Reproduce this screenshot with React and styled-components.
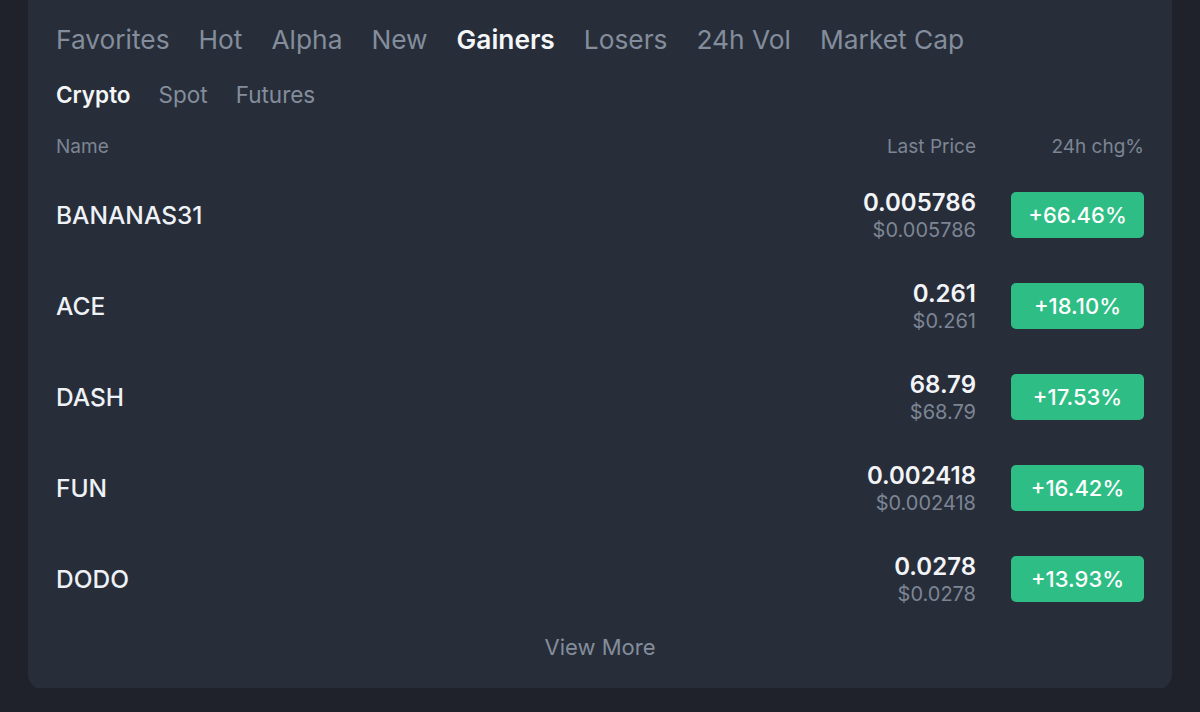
import styled, { createGlobalStyle } from 'styled-components';

const GlobalStyle = createGlobalStyle`
    html, body {
        margin: 0;
        padding: 0;
        background-color: #1f222a;
        font-family: Inter, "Noto Sans", sans-serif;
        overflow: hidden;
    }
`;

const Page = styled.div`
    width: 1200px;
    height: 712px;
    padding: 0 28px;
    box-sizing: border-box;
`;

const Card = styled.div`
    margin-top: -24px;
    height: 714px;
    box-sizing: border-box;
    padding: 43px 28px 0;
    border-radius: 16px;
    background-color: #272e3a;
    display: flex;
    flex-direction: column;
`;

const Tabs = styled.div`
    display: flex;
    gap: ${(p) => p.$gap}px;
    align-items: center;
    height: ${(p) => p.$height}px;
`;

const Tab = styled.div`
    font-size: ${(p) => p.$size}px;
    font-weight: ${(p) => (p.$active ? 600 : 400)};
    color: ${(p) => (p.$active ? '#f4f6f8' : '#848d9b')};
    white-space: nowrap;
`;

const Grid = styled.div`
    display: grid;
    grid-template-columns: 1fr 200px 168px;
    align-items: center;
`;

const Header = styled(Grid)`
    height: 32px;
    margin-top: 1px;
    margin-bottom: 7px;
    font-size: 19px;
    color: #7d8594;
`;

const HeadCell = styled.div`
    text-align: ${(p) => p.$align || 'left'};
`;

const Row = styled(Grid)`
    height: 91px;
`;

const Name = styled.div`
    font-size: 24.5px;
    font-weight: 500;
    color: #eef1f5;
`;

const Price = styled.div`
    display: flex;
    flex-direction: column;
    align-items: flex-end;
    gap: 1px;
`;

const PriceMain = styled.div`
    font-size: 24px;
    font-weight: 600;
    color: #f2f4f7;
`;

const PriceSub = styled.div`
    font-size: 20px;
    color: #7d8594;
`;

const Badge = styled.div`
    justify-self: end;
    width: 133px;
    height: 46px;
    border-radius: 5px;
    background-color: #2ebd85;
    color: #ffffff;
    font-size: 22px;
    font-weight: 500;
    display: flex;
    align-items: center;
    justify-content: center;
`;

const ViewMore = styled.div`
    text-align: center;
    font-size: 22px;
    color: #848d9b;
    margin-top: 10px;
`;

const tabs = ['Favorites', 'Hot', 'Alpha', 'New', 'Gainers', 'Losers', '24h Vol', 'Market Cap'];
const subTabs = ['Crypto', 'Spot', 'Futures'];

const rows = [
    { name: 'BANANAS31', price: '0.005786', usd: '$0.005786', chg: '+66.46%' },
    { name: 'ACE', price: '0.261', usd: '$0.261', chg: '+18.10%' },
    { name: 'DASH', price: '68.79', usd: '$68.79', chg: '+17.53%' },
    { name: 'FUN', price: '0.002418', usd: '$0.002418', chg: '+16.42%' },
    { name: 'DODO', price: '0.0278', usd: '$0.0278', chg: '+13.93%' },
];

export default function App() {
    return (
        <Page>
            <GlobalStyle />
            <Card>
                <Tabs $gap={29} $height={40}>
                    {tabs.map((t) => (
                        <Tab key={t} $size={26.3} $active={t === 'Gainers'}>{t}</Tab>
                    ))}
                </Tabs>
                <Tabs $gap={28} $height={70}>
                    {subTabs.map((t) => (
                        <Tab key={t} $size={22.5} $active={t === 'Crypto'}>{t}</Tab>
                    ))}
                </Tabs>
                <Header>
                    <HeadCell>Name</HeadCell>
                    <HeadCell $align="right">Last Price</HeadCell>
                    <HeadCell $align="right">24h chg%</HeadCell>
                </Header>
                {rows.map((r) => (
                    <Row key={r.name}>
                        <Name>{r.name}</Name>
                        <Price>
                            <PriceMain>{r.price}</PriceMain>
                            <PriceSub>{r.usd}</PriceSub>
                        </Price>
                        <Badge>{r.chg}</Badge>
                    </Row>
                ))}
                <ViewMore>View More</ViewMore>
            </Card>
        </Page>
    );
}
